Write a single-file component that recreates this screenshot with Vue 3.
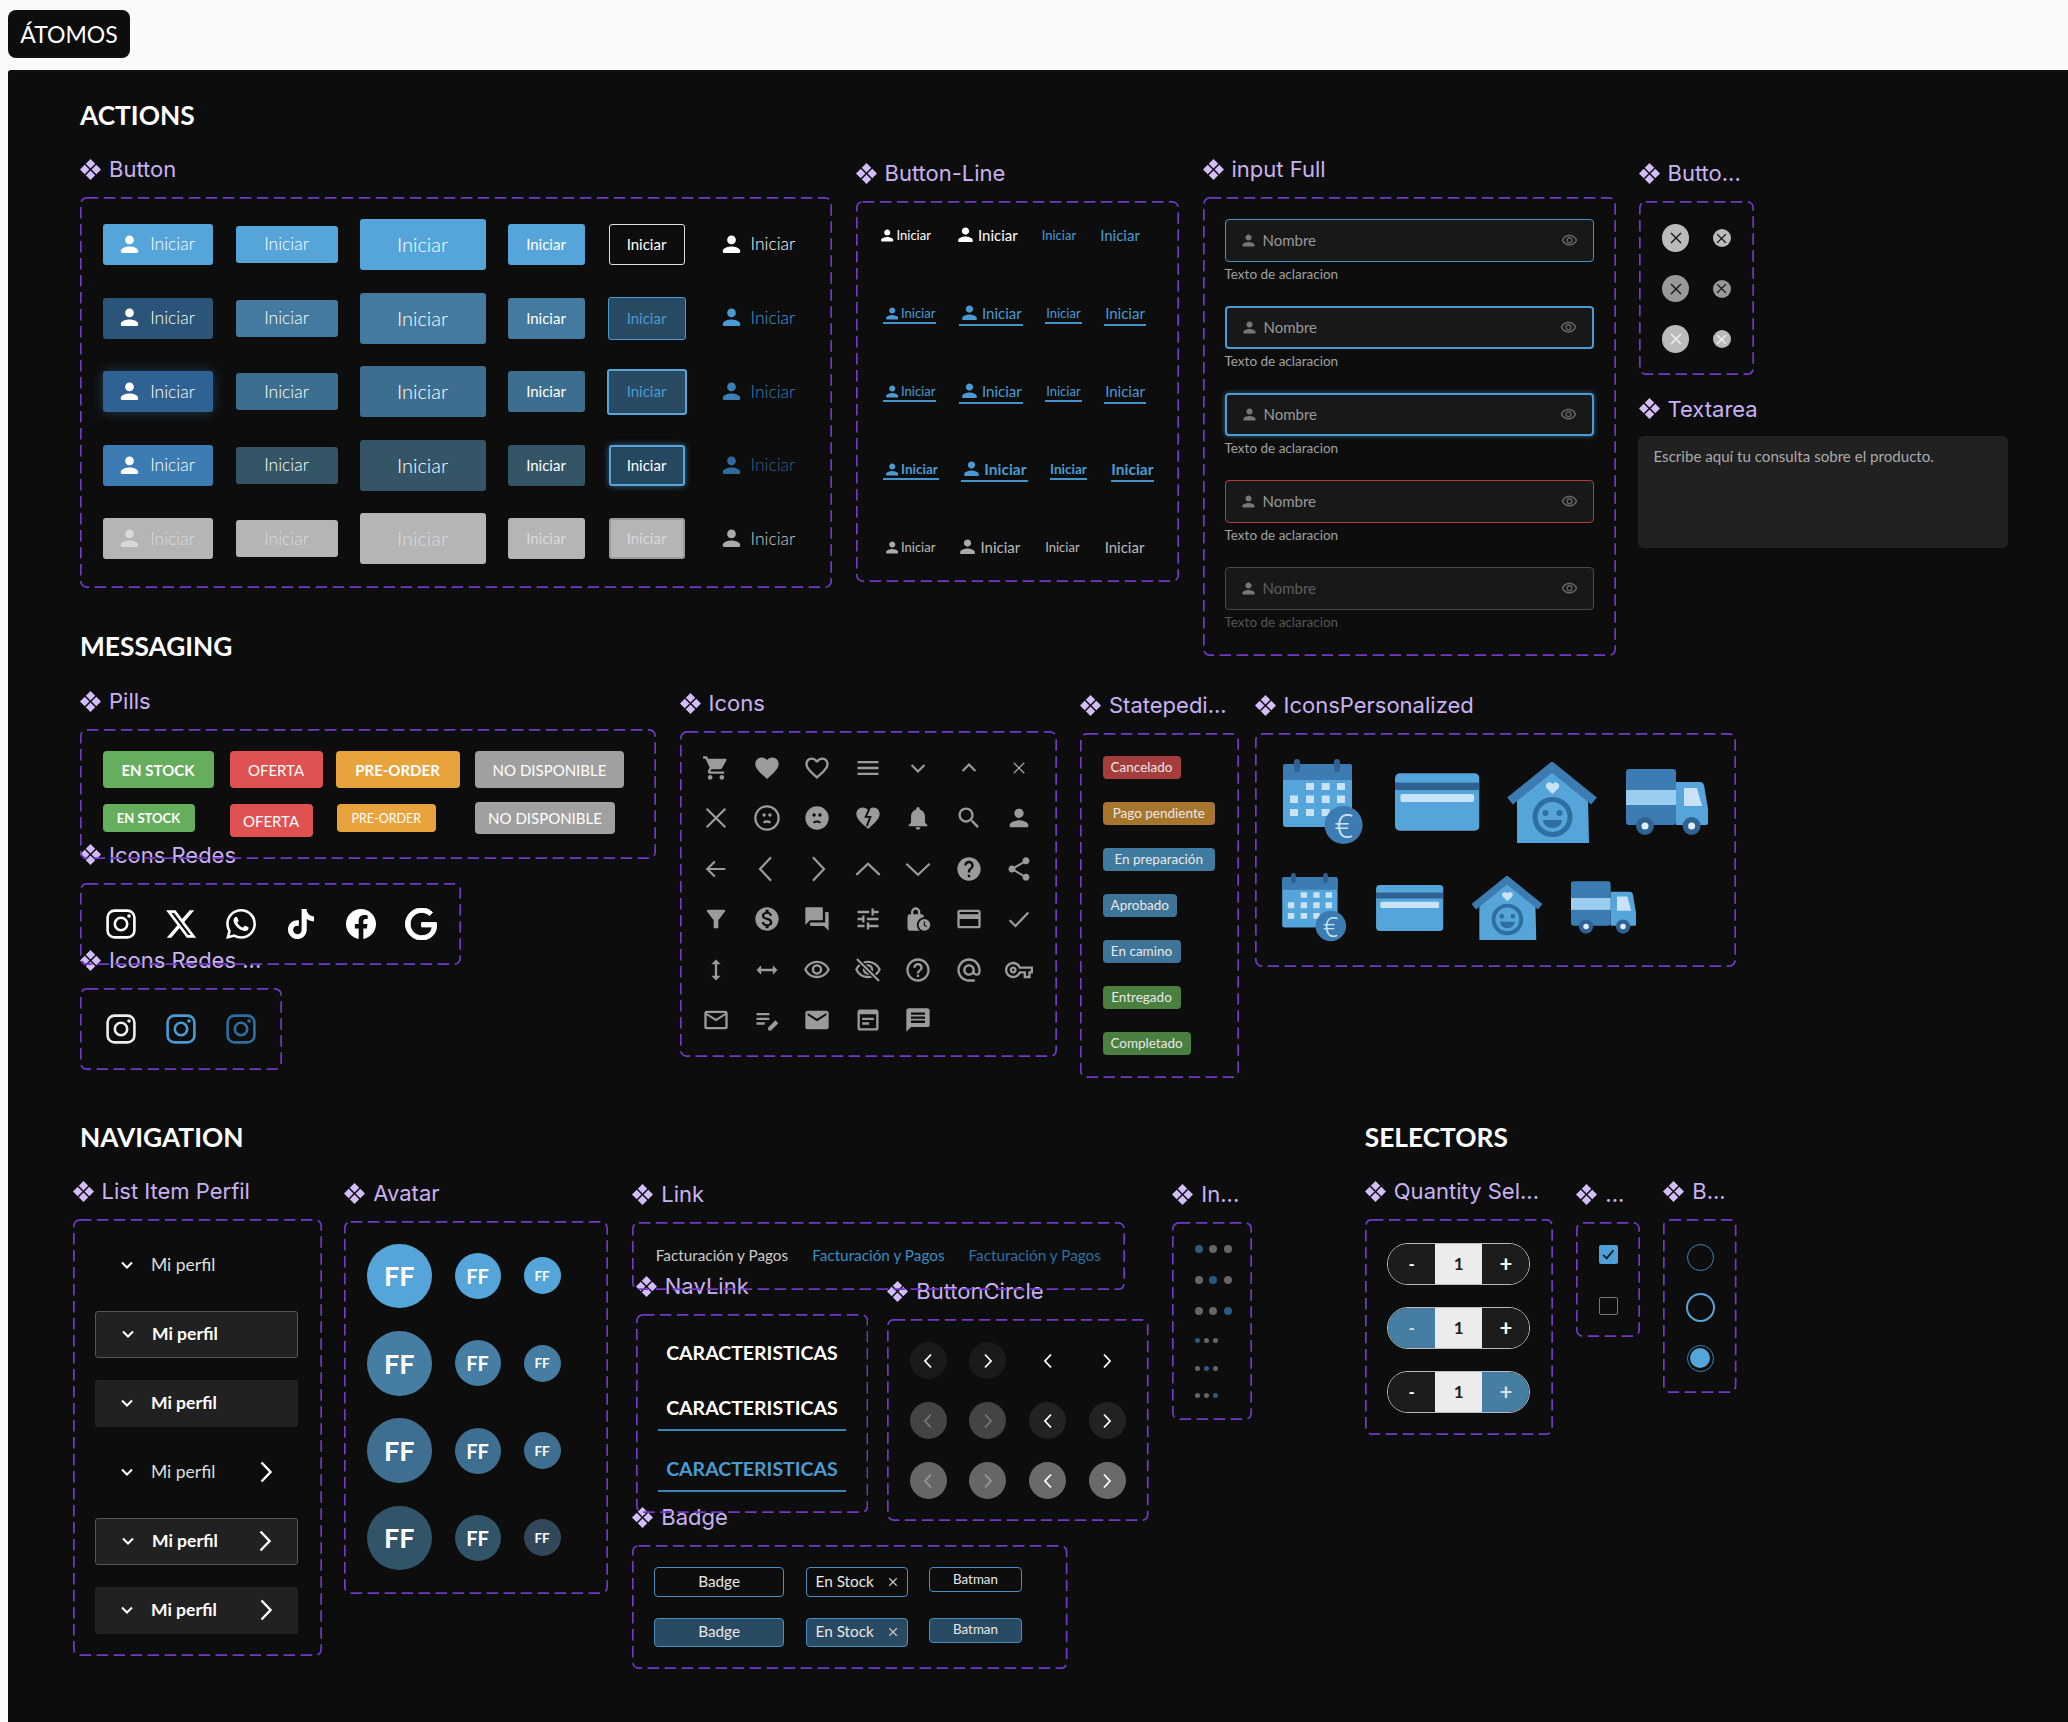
<script setup>
// paths for the 24px icon grid; "c" picks how a part is painted
const solid = (d) => ({ d, c: 'fill' })
const line = (d) => ({ d, c: 'line' })
const thin = (d) => ({ d, c: 'thin' })
const cut = (d) => ({ d, c: 'cut' })
const ring = 'M12 2a10 10 0 1 0 0 20a10 10 0 1 0 0-20z'
const heart = 'M12 21.35l-1.45-1.32C5.4 15.36 2 12.28 2 8.5 2 5.42 4.42 3 7.5 3c1.74 0 3.41.81 4.5 2.09C13.09 3.81 14.76 3 16.5 3 19.58 3 22 5.42 22 8.5c0 3.78-3.4 6.86-8.55 11.54L12 21.35z'
const eye = 'M12 6c3.79 0 7.17 2.13 8.82 5.5C19.17 14.87 15.79 17 12 17s-7.17-2.13-8.82-5.5C4.83 8.13 8.21 6 12 6m0-2C7 4 2.73 7.11 1 11.5 2.73 15.89 7 19 12 19s9.27-3.11 11-7.5C21.27 7.11 17 4 12 4zm0 5c1.38 0 2.5 1.12 2.5 2.5S13.38 14 12 14s-2.5-1.12-2.5-2.5S10.62 9 12 9m0-2c-2.48 0-4.5 2.02-4.5 4.5S9.52 16 12 16s4.5-2.02 4.5-4.5S14.48 7 12 7z'

const icons = [
  [solid('M7 18c-1.1 0-1.99.9-1.99 2S5.9 22 7 22s2-.9 2-2-.9-2-2-2zM1 2v2h2l3.6 7.59-1.35 2.45c-.16.28-.25.61-.25.96 0 1.1.9 2 2 2h12v-2H7.42c-.14 0-.25-.11-.25-.25l.03-.12.9-1.63h7.45c.75 0 1.41-.41 1.75-1.03l3.58-6.49c.08-.14.12-.31.12-.48 0-.55-.45-1-1-1H5.21l-.94-2H1zm16 16c-1.1 0-1.99.9-1.99 2s.89 2 1.99 2 2-.9 2-2-.9-2-2-2z')],
  [solid(heart)],
  [solid('M16.5 3c-1.74 0-3.41.81-4.5 2.09C10.91 3.81 9.24 3 7.5 3 4.42 3 2 5.42 2 8.5c0 3.78 3.4 6.86 8.55 11.54L12 21.35l1.45-1.32C18.6 15.36 22 12.28 22 8.5 22 5.42 19.58 3 16.5 3zm-4.4 15.55l-.1.1-.1-.1C7.14 14.24 4 11.39 4 8.5 4 6.5 5.5 5 7.5 5c1.54 0 3.04.99 3.57 2.36h1.87C13.46 5.99 14.96 5 16.5 5c2 0 3.5 1.5 3.5 3.5 0 2.89-3.14 5.74-7.9 10.05z')],
  [solid('M3 18h18v-2H3v2zm0-5h18v-2H3v2zm0-7v2h18V6H3z')],
  [line('M6.5 9.5l5.5 5.5 5.5-5.5')],
  [line('M6.5 14.5l5.5-5.5 5.5 5.5')],
  [thin('M7.5 7.5l9 9M16.5 7.5l-9 9')],

  [line('M4 4l16 16M20 4L4 20')],
  [line(ring), solid('M8 9.5a1.5 1.5 0 1 0 3 0a1.5 1.5 0 1 0-3 0zM13 9.5a1.5 1.5 0 1 0 3 0a1.5 1.5 0 1 0-3 0z'), line('M9 16c1.8-1.2 4.2-1.2 6 0')],
  [solid(ring), cut('M8 9.5a1.5 1.5 0 1 0 3 0a1.5 1.5 0 1 0-3 0zM13 9.5a1.5 1.5 0 1 0 3 0a1.5 1.5 0 1 0-3 0z'), { d: 'M9 16c1.8-1.2 4.2-1.2 6 0', c: 'cutline' }],
  [solid(heart), { d: 'M13.5 3.5L10 11h4l-3 8', c: 'cutline' }],
  [solid('M12 22c1.1 0 2-.9 2-2h-4c0 1.1.89 2 2 2zm6-6v-5c0-3.07-1.64-5.64-4.5-6.32V4c0-.83-.67-1.5-1.5-1.5s-1.5.67-1.5 1.5v.68C7.63 5.36 6 7.92 6 11v5l-2 2v1h16v-1l-2-2z')],
  [solid('M15.5 14h-.79l-.28-.27C15.41 12.59 16 11.11 16 9.5 16 5.91 13.09 3 9.5 3S3 5.91 3 9.5 5.91 16 9.5 16c1.61 0 3.09-.59 4.23-1.57l.27.28v.79l5 4.99L20.49 19l-4.99-5zm-6 0C7.01 14 5 11.99 5 9.5S7.01 5 9.5 5 14 7.01 14 9.5 11.99 14 9.5 14z')],
  [solid('M12 12c2.21 0 4-1.79 4-4s-1.79-4-4-4-4 1.79-4 4 1.79 4 4 4zm0 2c-2.67 0-8 1.34-8 4v1c0 .55.45 1 1 1h14c.55 0 1-.45 1-1v-1c0-2.66-5.33-4-8-4z')],

  [line('M20 12H4.5M11 5.5L4.5 12l6.5 6.5')],
  [line('M15.5 2L6 12l9.5 10')],
  [line('M8.5 2L18 12l-9.5 10')],
  [line('M2 17l10-9.5L22 17')],
  [line('M2 7.5l10 9.5 10-9.5')],
  [solid('M12 2C6.48 2 2 6.48 2 12s4.48 10 10 10 10-4.48 10-10S17.52 2 12 2zm1 17h-2v-2h2v2zm2.07-7.75l-.9.92C13.45 12.9 13 13.5 13 15h-2v-.5c0-1.1.45-2.1 1.17-2.83l1.24-1.26c.37-.36.59-.86.59-1.41 0-1.1-.9-2-2-2s-2 .9-2 2H8c0-2.21 1.79-4 4-4s4 1.79 4 4c0 .88-.36 1.68-.93 2.25z')],
  [solid('M18 16.08c-.76 0-1.44.3-1.96.77L8.91 12.7c.05-.23.09-.46.09-.7s-.04-.47-.09-.7l7.05-4.11c.54.5 1.25.81 2.04.81 1.66 0 3-1.34 3-3s-1.34-3-3-3-3 1.34-3 3c0 .24.04.47.09.7L8.04 9.81C7.5 9.31 6.79 9 6 9c-1.66 0-3 1.34-3 3s1.34 3 3 3c.79 0 1.5-.31 2.04-.81l7.12 4.16c-.05.21-.08.43-.08.65 0 1.61 1.31 2.92 2.92 2.92 1.61 0 2.92-1.31 2.92-2.92s-1.31-2.92-2.92-2.92z')],

  [solid('M4.25 5.61C6.27 8.2 10 13 10 13v6c0 .55.45 1 1 1h2c.55 0 1-.45 1-1v-6s3.72-4.8 5.74-7.39c.51-.66.04-1.61-.79-1.61H5.04c-.83 0-1.3.95-.79 1.61z')],
  [solid('M12 2C6.48 2 2 6.48 2 12s4.48 10 10 10 10-4.48 10-10S17.52 2 12 2zm1.41 16.09V20h-2.67v-1.93c-1.71-.36-3.16-1.46-3.27-3.4h1.96c.1 1.05.82 1.87 2.65 1.87 1.96 0 2.4-.98 2.4-1.59 0-.83-.44-1.61-2.67-2.14-2.48-.6-4.18-1.62-4.18-3.67 0-1.72 1.39-2.84 3.11-3.21V4h2.67v1.95c1.86.45 2.79 1.86 2.85 3.39H14.3c-.05-1.11-.64-1.87-2.22-1.87-1.5 0-2.4.68-2.4 1.64 0 .84.65 1.39 2.67 1.91s4.18 1.39 4.18 3.91c-.01 1.83-1.38 2.83-3.12 3.16z')],
  [solid('M21 6h-2v9H6v2c0 .55.45 1 1 1h11l4 4V7c0-.55-.45-1-1-1zm-4 6V3c0-.55-.45-1-1-1H3c-.55 0-1 .45-1 1v14l4-4h10c.55 0 1-.45 1-1z')],
  [solid('M3 17v2h6v-2H3zM3 5v2h10V5H3zm10 16v-2h8v-2h-8v-2h-2v6h2zM7 9v2H3v2h4v2h2V9H7zm14 4v-2H11v2h10zm-6-4h2V7h4V5h-4V3h-2v6z')],
  [solid('M15 8h-1V6a4 4 0 0 0-8 0v2H5a2 2 0 0 0-2 2v10a2 2 0 0 0 2 2h10a2 2 0 0 0 2-2V10a2 2 0 0 0-2-2zM8 6a2 2 0 0 1 4 0v2H8z'), cut('M17.5 10.5a6.5 6.5 0 1 0 0 13a6.5 6.5 0 1 0 0-13z'), solid('M17.5 12a5 5 0 1 0 0 10a5 5 0 1 0 0-10z'), { d: 'M17.5 14.2V17.3l2 1.3', c: 'cutthin' }],
  [solid('M20 4H4c-1.11 0-1.99.89-1.99 2L2 18c0 1.11.89 2 2 2h16c1.11 0 2-.89 2-2V6c0-1.11-.89-2-2-2zm0 14H4v-6h16v6zm0-10H4V6h16v2z')],
  [line('M4 13l5 5L20 6.5')],

  [solid('M13 6.99h3L12 3 8 6.99h3v10.02H8L12 21l4-3.99h-3z')],
  [solid('M21 12l-4-4v3H7V8l-4 4 4 4v-3h10v3z')],
  [solid(eye)],
  [solid(eye), { d: 'M2.5 2.5l19 19', c: 'cutwide' }, line('M2.5 2.5l19 19')],
  [solid('M11 18h2v-2h-2v2zm1-16C6.48 2 2 6.48 2 12s4.48 10 10 10 10-4.48 10-10S17.52 2 12 2zm0 18c-4.41 0-8-3.59-8-8s3.59-8 8-8 8 3.59 8 8-3.59 8-8 8zm0-14c-2.21 0-4 1.79-4 4h2c0-1.1.9-2 2-2s2 .9 2 2c0 2-3 1.75-3 5h2c0-2.25 3-2.5 3-5 0-2.21-1.79-4-4-4z')],
  [solid('M12 2C6.48 2 2 6.48 2 12s4.48 10 10 10h5v-2h-5c-4.34 0-8-3.66-8-8s3.66-8 8-8 8 3.66 8 8v1.43c0 .79-.71 1.57-1.5 1.57s-1.5-.78-1.5-1.57V12c0-2.76-2.24-5-5-5s-5 2.24-5 5 2.24 5 5 5c1.38 0 2.64-.56 3.54-1.47.65.89 1.77 1.47 2.96 1.47 1.97 0 3.5-1.6 3.5-3.57V12c0-5.52-4.48-10-10-10zm0 13c-1.66 0-3-1.34-3-3s1.34-3 3-3 3 1.34 3 3-1.34 3-3 3z')],
  [solid('M22 19h-6v-4h-2.68c-1.14 2.42-3.6 4-6.32 4-3.86 0-7-3.14-7-7s3.14-7 7-7c2.72 0 5.17 1.58 6.32 4H24v6h-2v4zm-4-2h2v-4h2v-2H11.94l-.23-.67C11.01 8.34 9.11 7 7 7c-2.76 0-5 2.24-5 5s2.24 5 5 5c2.11 0 4.01-1.34 4.71-3.33l.23-.67H18v4zM7 15c-1.65 0-3-1.35-3-3s1.35-3 3-3 3 1.35 3 3-1.35 3-3 3zm0-4c-.55 0-1 .45-1 1s.45 1 1 1 1-.45 1-1-.45-1-1-1z')],

  [solid('M20 4H4c-1.1 0-1.99.9-1.99 2L2 18c0 1.1.9 2 2 2h16c1.1 0 2-.9 2-2V6c0-1.1-.9-2-2-2zm0 14H4V8l8 5 8-5v10zm-8-7L4 6h16l-8 5z')],
  [solid('M3 10h11v2H3zM3 6h11v2H3zM3 14h7v2H3zM13 21v-2.5l6.2-6.2 2.5 2.5-6.2 6.2z')],
  [solid('M20 4H4c-1.1 0-1.99.9-1.99 2L2 18c0 1.1.9 2 2 2h16c1.1 0 2-.9 2-2V6c0-1.1-.9-2-2-2zm0 4l-8 5-8-5V6l8 5 8-5v2z')],
  [solid('M19 3H5c-1.1 0-2 .9-2 2v14c0 1.1.9 2 2 2h14c1.1 0 2-.9 2-2V5c0-1.1-.9-2-2-2zm0 16H5V7h14v12zM7 10h10v2H7zM7 14h6v2H7z')],
  [solid('M20 2H4c-1.1 0-1.99.9-1.99 2L2 22l4-4h14c1.1 0 2-.9 2-2V4c0-1.1-.9-2-2-2zM6 5.5h12v2H6zM6 9h12v2H6zM6 12.5h12v2H6z')]
]

const social = [
  { box: '1.2 2 21.6 20', cls: 's-x', d: 'M18.244 2.25h3.308l-7.227 8.26 8.502 11.24H16.17l-5.214-6.817L4.99 21.75H1.68l7.73-8.835L1.254 2.25H8.08l4.713 6.231zm-1.161 17.52h1.833L7.084 4.126H5.117z' },
  { box: '0 0 24 24', cls: '', d: 'M17.472 14.382c-.297-.149-1.758-.867-2.03-.967-.273-.099-.471-.148-.67.15-.197.297-.767.966-.94 1.164-.173.199-.347.223-.644.075-.297-.15-1.255-.463-2.39-1.475-.883-.788-1.48-1.761-1.653-2.059-.173-.297-.018-.458.13-.606.134-.133.298-.347.446-.52.149-.174.198-.298.298-.497.099-.198.05-.371-.025-.52-.075-.149-.669-1.612-.916-2.207-.242-.579-.487-.5-.669-.51-.173-.008-.371-.01-.57-.01-.198 0-.52.074-.792.372-.272.297-1.04 1.016-1.04 2.479 0 1.462 1.065 2.875 1.213 3.074.149.198 2.096 3.2 5.077 4.487.709.306 1.262.489 1.694.625.712.227 1.36.195 1.871.118.571-.085 1.758-.719 2.006-1.413.248-.694.248-1.289.173-1.413-.074-.124-.272-.198-.57-.347m-5.421 7.403h-.004a9.87 9.87 0 01-5.031-1.378l-.361-.214-3.741.982.998-3.648-.235-.374a9.86 9.86 0 01-1.51-5.26c.001-5.45 4.436-9.884 9.888-9.884 2.64 0 5.122 1.03 6.988 2.898a9.825 9.825 0 012.893 6.994c-.003 5.45-4.437 9.884-9.885 9.884m8.413-18.297A11.815 11.815 0 0012.05 0C5.495 0 .16 5.335.157 11.892c0 2.096.547 4.142 1.588 5.945L.057 24l6.305-1.654a11.882 11.882 0 005.683 1.448h.005c6.554 0 11.89-5.335 11.893-11.893a11.821 11.821 0 00-3.48-8.413z' },
  { box: '0 0 24 24', cls: '', d: 'M12.525.02c1.31-.02 2.61-.01 3.91-.02.08 1.53.63 3.09 1.75 4.17 1.12 1.11 2.7 1.62 4.24 1.79v4.03c-1.44-.05-2.89-.35-4.2-.97-.57-.26-1.1-.59-1.62-.93-.01 2.92.01 5.84-.02 8.75-.08 1.4-.54 2.79-1.35 3.94-1.31 1.92-3.58 3.17-5.91 3.21-1.43.08-2.86-.31-4.08-1.03-2.02-1.19-3.44-3.37-3.65-5.71-.02-.5-.03-1-.01-1.49.18-1.9 1.12-3.72 2.58-4.96 1.66-1.44 3.98-2.13 6.15-1.72.02 1.48-.04 2.96-.04 4.44-.99-.32-2.15-.23-3.02.37-.63.41-1.11 1.04-1.36 1.75-.21.51-.15 1.07-.14 1.61.24 1.64 1.82 3.02 3.5 2.87 1.12-.01 2.19-.66 2.77-1.61.19-.33.4-.67.41-1.06.1-1.79.06-3.57.07-5.36.01-4.03-.01-8.05.02-12.07z' },
  { box: '0 0 24 24', cls: '', d: 'M24 12.073c0-6.627-5.373-12-12-12s-12 5.373-12 12c0 5.99 4.388 10.954 10.125 11.854v-8.385H7.078v-3.47h3.047V9.43c0-3.007 1.792-4.669 4.533-4.669 1.312 0 2.686.235 2.686.235v2.953H15.83c-1.491 0-1.956.925-1.956 1.874v2.25h3.328l-.532 3.47h-2.796v8.385C19.612 23.027 24 18.062 24 12.073z' },
  { box: '0 0 24 24', cls: 's-g', d: 'M12.48 10.92v3.28h7.84c-.24 1.84-.853 3.187-1.787 4.133-1.147 1.147-2.933 2.4-6.053 2.4-4.827 0-8.6-3.893-8.6-8.72s3.773-8.72 8.6-8.72c2.6 0 4.507 1.027 5.907 2.347l2.307-2.307C18.747 1.44 16.133 0 12.48 0 5.867 0 .307 5.387.307 12s5.56 12 12.173 12c3.573 0 6.267-1.173 8.373-3.36 2.16-2.16 2.84-5.213 2.84-7.667 0-.76-.053-1.467-.173-2.053H12.48z' }
]

const inputs = ['in1', 'in2', 'in3', 'in4', 'in5']
const lineRows = ['r1', 'r2', 'r3', 'r4', 'r5']
const lineCells = ['si', 'bi', 's', 'b']

const states = [
  { t: 'Cancelado', w: 78, c: '#a53d3d' },
  { t: 'Pago pendiente', w: 112.5, c: '#a8752c' },
  { t: 'En preparación', w: 112.5, c: '#3f7a9f' },
  { t: 'Aprobado', w: 74.5, c: '#3f7499' },
  { t: 'En camino', w: 78, c: '#3f7499' },
  { t: 'Entregado', w: 78, c: '#4a7f40' },
  { t: 'Completado', w: 88, c: '#4a7f40' }
]

const custom = [
  [
    { id: '#cal', w: 80, h: 86, ml: 28.7, euro: 33 },
    { id: '#card', w: 84.5, h: 58, ml: 32 },
    { id: '#house', w: 90, h: 81, ml: 27.5 },
    { id: '#truck', w: 82, h: 66, ml: 29 }
  ],
  [
    { id: '#cal', w: 64.6, h: 69, ml: 27, euro: 27 },
    { id: '#card', w: 67.5, h: 46, ml: 30 },
    { id: '#house', w: 72, h: 64, ml: 27 },
    { id: '#truck', w: 65, h: 53, ml: 28 }
  ]
]

const avatars = ['a1', 'a2', 'a3', 'a4']
const listItems = [
  { cls: 'plain', arrow: false },
  { cls: 'boxed', arrow: false },
  { cls: 'filled', arrow: false },
  { cls: 'plain', arrow: true },
  { cls: 'boxed', arrow: true },
  { cls: 'filled', arrow: true }
]
const circles = [
  ['c1', 'c1', 'c0', 'c0'],
  ['c2', 'c2', 'c3', 'c3'],
  ['c4', 'c4', 'c5', 'c5']
]
const qty = [['', ''], ['on', ''], ['', 'on']]
</script>

<template>
  <div class="page">
    <svg class="defs" width="0" height="0" aria-hidden="true">
      <symbol id="dm" viewBox="0 0 24 24">
        <path d="M12 0l5.4 5.4L12 10.8 6.6 5.4zM5.4 6.6L10.8 12l-5.4 5.4L0 12zM18.6 6.6L24 12l-5.4 5.4L13.2 12zM12 13.2l5.4 5.4L12 24l-5.4-5.4z" fill="currentColor" />
      </symbol>
      <symbol id="person" viewBox="4 3.5 16 17">
        <path d="M12 12c2.21 0 4-1.79 4-4s-1.79-4-4-4-4 1.79-4 4 1.79 4 4 4zm0 2c-2.67 0-8 1.34-8 4v1c0 .55.45 1 1 1h14c.55 0 1-.45 1-1v-1c0-2.66-5.33-4-8-4z" fill="currentColor" />
      </symbol>
      <symbol id="eye" viewBox="0 0 24 24">
        <path d="M12 6c3.79 0 7.17 2.13 8.82 5.5C19.17 14.87 15.79 17 12 17s-7.17-2.13-8.82-5.5C4.83 8.13 8.21 6 12 6m0-2C7 4 2.73 7.11 1 11.5 2.73 15.89 7 19 12 19s9.27-3.11 11-7.5C21.27 7.11 17 4 12 4zm0 5c1.38 0 2.5 1.12 2.5 2.5S13.38 14 12 14s-2.5-1.12-2.5-2.5S10.62 9 12 9m0-2c-2.48 0-4.5 2.02-4.5 4.5S9.52 16 12 16s4.5-2.02 4.5-4.5S14.48 7 12 7z" fill="currentColor" />
      </symbol>
      <symbol id="ig" viewBox="0 0 30 30">
        <rect x="1.6" y="1.6" width="26.8" height="26.8" rx="7" fill="none" stroke="currentColor" stroke-width="2.6" />
        <circle cx="15" cy="15" r="6.2" fill="none" stroke="currentColor" stroke-width="2.6" />
        <circle cx="23" cy="7" r="1.8" fill="currentColor" />
      </symbol>
      <symbol id="cal" viewBox="0 0 80 86">
        <rect x="0" y="5" width="69" height="63" rx="3" fill="#55a5da" />
        <path d="M0 21V8a3 3 0 0 1 3-3h63a3 3 0 0 1 3 3v13z" fill="#3d7cb2" />
        <rect x="11" y="0" width="6" height="13" rx="3" fill="#2f6292" />
        <rect x="51" y="0" width="6" height="13" rx="3" fill="#2f6292" />
        <path d="M23 24h8v7h-8zM38.7 24h8v7h-8zM54 24h8v7h-8zM7 36.5h8v7.5H7zM23 36.5h8v7.5h-8zM38.7 36.5h8v7.5h-8zM54 36.5h8v7.5h-8zM7 50h8v7H7zM23 50h8v7h-8zM38.7 50h8v7h-8z" fill="#c8e3f7" />
        <circle cx="60.6" cy="66" r="19" fill="#3d7cb2" />
      </symbol>
      <symbol id="card" viewBox="0 0 85 58">
        <rect width="85" height="58" rx="5" fill="#55a5da" />
        <rect y="9.5" width="85" height="7.5" fill="#2f6292" />
        <rect x="5.5" y="21" width="74" height="8" rx="2" fill="#c8e3f7" />
      </symbol>
      <symbol id="house" viewBox="0 0 90 81">
        <path d="M10 36L45 8l36 28 1 45H10z" fill="#55a5da" />
        <path d="M3 39L45 5l42 34" fill="none" stroke="#3d7cb2" stroke-width="9" />
        <path d="M45.5 32l-6-6a3.6 3.6 0 0 1 6-4a3.6 3.6 0 0 1 6 4z" fill="#c8e3f7" />
        <circle cx="45.5" cy="55" r="17.5" fill="#55a5da" stroke="#2f6ea0" stroke-width="5" />
        <circle cx="38.5" cy="51" r="3" fill="#2f6ea0" />
        <circle cx="52.5" cy="51" r="3" fill="#2f6ea0" />
        <path d="M36 58h19a9.5 8 0 0 1-19 0z" fill="#2f6ea0" />
      </symbol>
      <symbol id="truck" viewBox="0 0 82 66">
        <path d="M50 13h24q3 0 4 3l4 24v14q0 2-2 2H50z" fill="#55a5da" />
        <path d="M58 19h13l5 18H58z" fill="#c8e3f7" />
        <rect width="50" height="56" rx="3" fill="#3d7cb2" />
        <rect y="21" width="50" height="15" fill="#9bcdf0" />
        <circle cx="19" cy="57" r="9" fill="#2f6292" />
        <circle cx="19" cy="57" r="3.5" fill="#dff0fb" />
        <circle cx="65.6" cy="57" r="9" fill="#2f6292" />
        <circle cx="65.6" cy="57" r="3.5" fill="#dff0fb" />
      </symbol>
    </svg>

    <div class="tab">ÁTOMOS</div>

    <div class="canvas">
      <!-- ACTIONS -->
      <h2 class="title">ACTIONS</h2>
      <div class="row row-actions">
        <div class="group">
          <div class="label"><svg class="dm"><use href="#dm" /></svg><span>Button</span></div>
          <div class="frame f-button">
            <svg class="dash"><rect /></svg>
            <div class="btn-grid">
              <template v-for="s in 5" :key="s">
                <div class="btn w-a" :class="`fa${s}`"><svg class="pi"><use href="#person" /></svg>Iniciar</div>
                <div class="btn w-b" :class="`fb${s}`">Iniciar</div>
                <div class="btn w-c" :class="`fb${s}`">Iniciar</div>
                <div class="btn w-d" :class="`fb${s}`">Iniciar</div>
                <div class="btn w-e" :class="`fe${s}`">Iniciar</div>
                <div class="btn w-f" :class="`ff${s}`"><svg class="pi"><use href="#person" /></svg>Iniciar</div>
              </template>
            </div>
          </div>
        </div>

        <div class="group g-line">
          <div class="label"><svg class="dm"><use href="#dm" /></svg><span>Button-Line</span></div>
          <div class="frame f-line">
            <svg class="dash"><rect /></svg>
            <div v-for="r in lineRows" :key="r" class="ln-row" :class="r">
              <div v-for="c in lineCells" :key="c" class="ln" :class="c">
                <svg v-if="c === 'si' || c === 'bi'" class="pi"><use href="#person" /></svg>
                <span>Iniciar</span>
              </div>
            </div>
          </div>
        </div>

        <div class="group g-input">
          <div class="label"><svg class="dm"><use href="#dm" /></svg><span>input Full</span></div>
          <div class="frame f-input">
            <svg class="dash"><rect /></svg>
            <div v-for="v in inputs" :key="v" class="field" :class="v">
              <div class="box">
                <svg class="pi"><use href="#person" /></svg>
                <span class="ph">Nombre</span>
                <svg class="eye"><use href="#eye" /></svg>
              </div>
              <div class="help">Texto de aclaracion</div>
            </div>
          </div>
        </div>

        <div class="col-right">
          <div class="group">
            <div class="label"><svg class="dm"><use href="#dm" /></svg><span>Butto...</span></div>
            <div class="frame f-close">
              <svg class="dash"><rect /></svg>
              <template v-for="n in 3" :key="n">
                <div class="x-big" :class="`x${n}`">
                  <svg viewBox="0 0 24 24"><path d="M6 6l12 12M18 6L6 18" /></svg>
                </div>
                <div class="x-small" :class="`x${n}`">
                  <svg viewBox="0 0 24 24"><path d="M5 5l14 14M19 5L5 19" /></svg>
                </div>
              </template>
            </div>
          </div>
          <div class="group g-textarea">
            <div class="label l-ta"><svg class="dm"><use href="#dm" /></svg><span>Textarea</span></div>
            <div class="textarea">Escribe aquí tu consulta sobre el producto.</div>
          </div>
        </div>
      </div>

      <!-- MESSAGING -->
      <h2 class="title">MESSAGING</h2>
      <div class="row row-msg">
        <div class="col-pills">
          <div class="group">
            <div class="label"><svg class="dm"><use href="#dm" /></svg><span>Pills</span></div>
            <div class="frame f-pills">
              <svg class="dash"><rect /></svg>
              <div class="pill green bold p-lg w111">EN STOCK</div>
              <div class="pill red p-lg w93">OFERTA</div>
              <div class="pill orange bold p-lg w124">PRE-ORDER</div>
              <div class="pill gray p-lg w149">NO DISPONIBLE</div>
              <div class="pill green bold p-sm w92">EN STOCK</div>
              <div class="pill red p-md w83">OFERTA</div>
              <div class="pill orange p-sm w98">PRE-ORDER</div>
              <div class="pill gray p-md w140">NO DISPONIBLE</div>
            </div>
          </div>
          <div class="group g-redes">
            <div class="label"><svg class="dm"><use href="#dm" /></svg><span>Icons Redes</span></div>
            <div class="frame f-redes">
              <svg class="dash"><rect /></svg>
              <svg class="soc ig1"><use href="#ig" /></svg>
              <svg v-for="s in social" :key="s.d" class="soc" :class="s.cls" :viewBox="s.box" preserveAspectRatio="none"><path :d="s.d" fill="#fff" /></svg>
            </div>
          </div>
          <div class="group g-redes">
            <div class="label"><svg class="dm"><use href="#dm" /></svg><span>Icons Redes ...</span></div>
            <div class="frame f-redes2">
              <svg class="dash"><rect /></svg>
              <svg class="soc ig1"><use href="#ig" /></svg>
              <svg class="soc ig2"><use href="#ig" /></svg>
              <svg class="soc ig3"><use href="#ig" /></svg>
            </div>
          </div>
        </div>

        <div class="group g-icons">
          <div class="label"><svg class="dm"><use href="#dm" /></svg><span>Icons</span></div>
          <div class="frame f-icons">
            <svg class="dash"><rect /></svg>
            <svg v-for="(ic, i) in icons" :key="i" class="ic" viewBox="0 0 24 24">
              <path v-for="(p, j) in ic" :key="j" :d="p.d" :class="p.c" />
            </svg>
          </div>
        </div>

        <div class="group g-state">
          <div class="label"><svg class="dm"><use href="#dm" /></svg><span>Statepedi...</span></div>
          <div class="frame f-state">
            <svg class="dash"><rect /></svg>
            <div v-for="s in states" :key="s.t" class="state" :style="{ width: s.w + 'px', background: s.c }">{{ s.t }}</div>
          </div>
        </div>

        <div class="group g-pers">
          <div class="label"><svg class="dm"><use href="#dm" /></svg><span>IconsPersonalized</span></div>
          <div class="frame f-pers">
            <svg class="dash"><rect /></svg>
            <div v-for="(r, i) in custom" :key="i" class="pers-row" :class="`pr${i}`">
              <div
                v-for="ic in r"
                :key="ic.id"
                class="pers"
                :style="{ width: ic.w + 'px', height: ic.h + 'px', marginLeft: ic.ml + 'px' }"
              >
                <svg><use :href="ic.id" /></svg>
                <span v-if="ic.euro" class="euro" :style="{ fontSize: ic.euro + 'px' }">€</span>
              </div>
            </div>
          </div>
        </div>
      </div>

      <!-- NAVIGATION + SELECTORS -->
      <div class="row row-nav">
        <div class="sec-nav">
          <h2 class="title">NAVIGATION</h2>
          <div class="row">
            <div class="group g-list">
              <div class="label"><svg class="dm"><use href="#dm" /></svg><span>List Item Perfil</span></div>
              <div class="frame f-list">
                <svg class="dash"><rect /></svg>
                <div v-for="(it, i) in listItems" :key="i" class="li" :class="it.cls">
                  <svg class="li-chev" viewBox="0 0 12 8"><path d="M1 1.5l5 5 5-5" /></svg>
                  <span>Mi perfil</span>
                  <svg v-if="it.arrow" class="li-arrow" viewBox="0 0 12 22"><path d="M1.5 1.5L10.5 11l-9 9.5" /></svg>
                </div>
              </div>
            </div>

            <div class="group g-avatar">
              <div class="label"><svg class="dm"><use href="#dm" /></svg><span>Avatar</span></div>
              <div class="frame f-avatar">
                <svg class="dash"><rect /></svg>
                <template v-for="a in avatars" :key="a">
                  <div class="av lg" :class="a">FF</div>
                  <div class="av md" :class="a">FF</div>
                  <div class="av sm" :class="a">FF</div>
                </template>
              </div>
            </div>

            <div class="col-mid">
              <div class="group">
                <div class="label"><svg class="dm"><use href="#dm" /></svg><span>Link</span></div>
                <div class="frame f-link">
                  <svg class="dash"><rect /></svg>
                  <span class="lk l1">Facturación y Pagos</span>
                  <span class="lk l2">Facturación y Pagos</span>
                  <span class="lk l3">Facturación y Pagos</span>
                </div>
              </div>
              <div class="mid-row">
                <div class="group g-navlink">
                  <div class="label"><svg class="dm"><use href="#dm" /></svg><span>NavLink</span></div>
                  <div class="frame f-navlink">
                    <svg class="dash"><rect /></svg>
                    <div class="nl n1">CARACTERISTICAS</div>
                    <div class="nl n2">CARACTERISTICAS</div>
                    <div class="nl n3">CARACTERISTICAS</div>
                  </div>
                </div>
                <div class="group g-circle">
                  <div class="label"><svg class="dm"><use href="#dm" /></svg><span>ButtonCircle</span></div>
                  <div class="frame f-circle">
                    <svg class="dash"><rect /></svg>
                    <template v-for="(r, i) in circles" :key="i">
                      <div v-for="(c, j) in r" :key="j" class="circ" :class="c">
                        <svg viewBox="0 0 10 16"><path :d="j % 2 ? 'M2 1.5L8 8l-6 6.5' : 'M8 1.5L2 8l6 6.5'" /></svg>
                      </div>
                    </template>
                  </div>
                </div>
              </div>
              <div class="group g-badge">
                <div class="label"><svg class="dm"><use href="#dm" /></svg><span>Badge</span></div>
                <div class="frame f-badge">
                  <svg class="dash"><rect /></svg>
                  <div v-for="n in 2" :key="n" class="bd-row" :class="{ on: n === 2 }">
                    <div class="bd bd1">Badge</div>
                    <div class="bd bd2">En Stock
                      <svg viewBox="0 0 12 12"><path d="M1.5 1.5l9 9M10.5 1.5l-9 9" /></svg>
                    </div>
                    <div class="bd bd3">Batman</div>
                  </div>
                </div>
              </div>
            </div>

            <div class="group g-ind">
              <div class="label"><svg class="dm"><use href="#dm" /></svg><span>In...</span></div>
              <div class="frame f-ind">
                <svg class="dash"><rect /></svg>
                <div v-for="n in 3" :key="n" class="dots big">
                  <i v-for="k in 3" :key="k" :class="{ on: k === n }"></i>
                </div>
                <div v-for="n in 3" :key="'s' + n" class="dots small">
                  <i v-for="k in 3" :key="k" :class="{ on: k === n }"></i>
                </div>
              </div>
            </div>
          </div>
        </div>

        <div class="sec-sel">
          <h2 class="title">SELECTORS</h2>
          <div class="row">
            <div class="group">
              <div class="label"><svg class="dm"><use href="#dm" /></svg><span>Quantity Sel...</span></div>
              <div class="frame f-qty">
                <svg class="dash"><rect /></svg>
                <div v-for="(q, i) in qty" :key="i" class="qty">
                  <span class="q-btn" :class="q[0]">-</span>
                  <span class="q-val">1</span>
                  <span class="q-btn plus" :class="q[1]">+</span>
                </div>
              </div>
            </div>
            <div class="group g-check">
              <div class="label"><svg class="dm"><use href="#dm" /></svg><span>...</span></div>
              <div class="frame f-check">
                <svg class="dash"><rect /></svg>
                <div class="cb on"><svg viewBox="0 0 18 18"><path d="M4 9.5l3.5 3.5L14 5" /></svg></div>
                <div class="cb"></div>
              </div>
            </div>
            <div class="group g-radio">
              <div class="label"><svg class="dm"><use href="#dm" /></svg><span>B...</span></div>
              <div class="frame f-radio">
                <svg class="dash"><rect /></svg>
                <div class="rd"></div>
                <div class="rd hov"></div>
                <div class="rd sel"><i></i></div>
              </div>
            </div>
          </div>
        </div>
      </div>
    </div>
  </div>
</template>

<style>
html, body { margin: 0; background: #f9fafc; }
</style>

<style scoped>
.page {
  position: relative;
  width: 2068px;
  height: 1722px;
  overflow: hidden;
  background: #f9fafc;
  font-family: Lato, "Noto Sans", sans-serif;
  font-weight: 300;
  color: #fff;
}
.defs { position: absolute; }

.tab {
  margin: 10px 0 0 8px;
  width: 122px;
  height: 48px;
  border-radius: 8px;
  background: #0d0d0d;
  font-size: 23px;
  font-weight: 400;
  line-height: 48px;
  text-align: center;
}
.canvas {
  margin: 12px 0 0 8px;
  height: 1652px;
  padding: 25px 0 0 72px;
  box-sizing: border-box;
  background: #0d0d0d;
  border-top-left-radius: 3px;
}
.title {
  margin: 0 0 20px;
  height: 40px;
  font-size: 26.3px;
  font-weight: 700;
  line-height: 40px;
}
.row { display: flex; align-items: flex-start; }
.row-actions { height: 471px; }
.row-msg { height: 430px; margin-top: 21px; }

.label {
  display: flex;
  align-items: center;
  gap: 8px;
  height: 28px;
  margin-bottom: 14px;
  color: #c9b2f2;
  font-family: Inter, sans-serif;
  font-size: 22px;
  font-weight: 400;
  white-space: nowrap;
}
.dm { width: 21px; height: 21px; color: #d3bcf8; flex: none; }

.frame { position: relative; box-sizing: border-box; }
.dash {
  position: absolute;
  left: 0;
  top: 0;
  width: 100%;
  height: 100%;
  pointer-events: none;
}
.dash rect {
  x: 0.85px;
  y: 0.85px;
  width: calc(100% - 1.7px);
  height: calc(100% - 1.7px);
  rx: 6px;
  fill: none;
  stroke: #7239c7;
  stroke-width: 1.7px;
  stroke-dasharray: 11.5 5.5;
}

/* Button */
.f-button { width: 752px; height: 391px; padding: 10.7px 0 0 22.5px; }
.btn-grid {
  display: grid;
  grid-template-columns: 133px 124px 148px 101px 113px auto;
  grid-auto-rows: 73.6px;
  align-items: center;
  justify-items: start;
}
.btn {
  display: flex;
  align-items: center;
  justify-content: center;
  box-sizing: border-box;
  padding-bottom: 1px;
  border-radius: 3px;
  font-size: 17.5px;
}
.pi { width: 19px; height: 18.5px; flex: none; }
.w-a { width: 110px; height: 41px; gap: 11px; }
.w-b { width: 102px; height: 37px; }
.w-c { width: 126px; height: 51px; font-size: 20px; }
.w-d { width: 77px; height: 41px; font-size: 15px; font-weight: 400; }
.w-e { width: 76px; height: 41px; font-size: 15px; font-weight: 400; }
.w-f { gap: 10px; }

.fa1, .fb1 { background: #55a5da; }
.fa2 { background: #2a5478; }
.fb2 { background: #447aa0; }
.fa3 { background: #2f6292; box-shadow: 0 0 12px rgba(74, 155, 211, .35); }
.fb3 { background: #3e6e8f; }
.fa4 { background: #3d7cb2; }
.fb4 { background: #335566; }
.fa5, .fb5 { background: #b5b5b5; color: #d9d9d9; }
.fe1 { border: 1px solid #ddd; background: #0d0d0d; }
.fe2 { border: 1.5px solid #4b9ad4; background: #284a62; color: #4a9bd3; height: 43px; width: 78px; margin-left: -1px; }
.fe3 { border: 2px solid #56a5da; background: #284a62; color: #4a9bd3; width: 80px; height: 46px; margin-left: -2px; }
.fe4 { border: 2px solid #56a5da; background: #254760; box-shadow: 0 0 6px rgba(86, 165, 218, .6); }
.fe5 { border: 2px solid #999; background: #b5b5b5; color: #d9d9d9; }
.ff2 { color: #4a9bd3; }
.ff3 { color: #3d7fb5; }
.ff4 { color: #2d5f8a; }
.ff4 .pi { color: #2e6a9e; }
.ff5 { color: #ccc; }
.ff5 .pi { color: #aaa; }

/* Button-Line */
.g-line { margin: 4px 0 0 23.5px; }
.f-line { width: 323px; height: 381px; display: flex; flex-direction: column; gap: 10px; }
.ln-row { display: flex; align-items: center; height: 68px; }
.ln { display: flex; align-items: center; flex: none; font-weight: 400; }
.ln.si, .ln.s { height: 18px; font-size: 13px; }
.ln.bi, .ln.b { height: 22px; font-size: 15px; }
.ln.si .pi { width: 12.5px; height: 13px; margin-right: 3px; }
.ln.bi .pi { width: 15px; height: 15.5px; margin-right: 5px; }
.r1 { padding-left: 25.5px; gap: 27px; }
.r1 .ln:nth-child(n+3) { color: #4a9bd3; }
.r1 .ln:nth-child(3) { margin-left: -3px; }
.r1 .ln:nth-child(4) { margin-left: -3px; }
.r2, .r3, .r4 { padding-left: 27px; gap: 22.5px; color: #4a9bd3; }
.r2 .ln, .r3 .ln, .r4 .ln { box-shadow: 0 2px 0 #4293c9; }
.r2 .si, .r3 .si, .r4 .si, .r2 .bi, .r3 .bi, .r4 .bi { padding: 0 1px 0 3px; }
.r2 .s, .r2 .b, .r3 .s, .r3 .b { padding: 0 1px; }
.r4 .ln { font-weight: 700; }
.r4 .si, .r4 .s { font-size: 13.5px; }
.r4 .bi, .r4 .b { font-size: 15.5px; }
.r4 .b { margin-left: 2px; }
.r5 { padding-left: 30px; gap: 25px; color: #bbb; }
.r5 .pi { color: #aaa; }

/* input */
.g-input { margin-left: 24px; }
.f-input { width: 413px; height: 459px; padding: 22px 22px 0; }
.field { height: 87px; }
.box {
  display: flex;
  align-items: center;
  box-sizing: border-box;
  height: 43px;
  padding: 0 15px 0 16px;
  border: 1.5px solid #4692c4;
  border-radius: 4px;
  background: #181818;
  color: #777;
}
.box .pi { width: 13px; height: 13px; }
.ph { margin: 0 0 2px 8px; font-size: 15px; font-weight: 400; color: #999; }
.eye { width: 17px; height: 17px; margin-left: auto; color: #666; }
.help { margin-top: 4px; font-size: 13.5px; font-weight: 400; line-height: 16px; color: #a0a0a0; }
.in2 .box { border: 2px solid #4c9ad4; }
.in3 .box { border: 2px solid #4c9ad4; box-shadow: 0 0 5px rgba(76, 154, 212, .6); }
.in4 .box { border-color: #b13e3e; }
.in5 .box { border-color: #4a4a4a; }
.in5 .ph { color: #5e5e5e; }
.in5 .help { color: #555; }

/* close buttons */
.col-right { margin: 4px 0 0 23px; }
.f-close {
  width: 115px;
  height: 174px;
  padding: 23px 0 0 23px;
  display: grid;
  grid-template-columns: 28px 18px;
  grid-auto-rows: 28px;
  column-gap: 23px;
  row-gap: 22.5px;
  align-items: center;
  justify-items: center;
}
.x-big, .x-small { display: flex; align-items: center; justify-content: center; border-radius: 50%; background: #bbb; }
.x-big { width: 27.5px; height: 27.5px; }
.x-small { width: 18px; height: 18px; }
.x-big svg { width: 20px; height: 20px; }
.x-small svg { width: 15px; height: 15px; }
.x-big path, .x-small path { stroke: #111; stroke-width: 1.6; fill: none; }
.x-small path { stroke-width: 2.2; }
.x2 { background: #999; }
.x3 path { stroke: #f4f4f4; }
.g-textarea { margin-top: 19.7px; }
.l-ta { margin-bottom: 13px; }
.textarea {
  box-sizing: border-box;
  width: 370px;
  height: 112px;
  margin-left: -1px;
  padding: 10px 16px;
  border-radius: 6px;
  background: #212121;
  color: #aaa;
  font-size: 15.1px;
  font-weight: 400;
  line-height: 20px;
}

/* Pills */
.col-pills { width: 576px; }
.f-pills {
  width: 576px;
  height: 130px;
  padding: 22px 0 0 22.5px;
  display: grid;
  grid-template-columns: 127px 106px 139.5px auto;
  grid-template-rows: 37px auto;
  row-gap: 16px;
  align-items: start;
}
.pill {
  display: flex;
  align-items: center;
  justify-content: center;
  border-radius: 4px;
  font-size: 15px;
  font-weight: 400;
}
.bold { font-weight: 700; }
.green { background: #67ad5e; }
.red { background: #e05252; }
.orange { background: #e8a33d; }
.gray { background: #a0a0a0; }
.p-lg { height: 37px; }
.p-sm { height: 28px; font-size: 13px; }
.p-md { height: 33px; }
.w111 { width: 111px; }
.w93 { width: 93px; }
.w124 { width: 124px; }
.w149 { width: 149px; }
.w92 { width: 92px; }
.w83 { width: 83px; }
.w98 { width: 98.5px; margin-left: 1.5px; font-size: 12.5px; }
.w140 { width: 140px; height: 32px; margin-top: -2px; }
.g-redes { margin-top: -18.5px; }
.f-redes, .f-redes2 {
  height: 82px;
  padding-left: 26px;
  display: flex;
  align-items: center;
  gap: 30px;
}
.f-redes { width: 381px; }
.f-redes2 { width: 202px; }
.soc { width: 30px; height: 30px; flex: none; }
.ig1 { color: #eee; }
.f-redes .ig1 { color: #fff; }
.ig2 { color: #4a9bd3; }
.ig3 { color: #2f6ea0; }
.s-x { height: 28px; }
.s-g { width: 32px; height: 32px; margin: 0 -1px; }
.s-g path { stroke: #fff; stroke-width: .7; }

/* Icons grid */
.g-icons { margin: 2px 0 0 23.5px; }
.f-icons {
  width: 377px;
  height: 326px;
  padding: 11.5px 0 0 11.5px;
  display: grid;
  grid-template-columns: repeat(7, 50.5px);
  grid-auto-rows: 50.5px;
  place-items: center;
}
.ic { width: 28px; height: 28px; }
.ic .fill { fill: #9b9b9b; fill-rule: evenodd; }
.ic .line { fill: none; stroke: #9b9b9b; stroke-width: 1.9; }
.ic .thin { fill: none; stroke: #9b9b9b; stroke-width: 1.2; }
.ic .cut { fill: #0d0d0d; }
.ic .cutline { fill: none; stroke: #0d0d0d; stroke-width: 1.6; }
.ic .cutthin { fill: none; stroke: #0d0d0d; stroke-width: 1; }
.ic .cutwide { fill: none; stroke: #0d0d0d; stroke-width: 4; }

/* State */
.g-state { margin: 4px 0 0 23.5px; }
.f-state {
  width: 159px;
  height: 345px;
  padding: 23px 0 0 22.5px;
  display: flex;
  flex-direction: column;
  gap: 23px;
}
.state {
  flex: none;
  height: 23px;
  border-radius: 4px;
  font-size: 13.5px;
  font-weight: 400;
  line-height: 22px;
  text-align: center;
  color: #e8e8e8;
}

/* Personalized icons */
.g-pers { margin: 4px 0 0 15.5px; }
.f-pers { width: 481px; height: 234px; padding-top: 26px; }
.pers-row { display: flex; align-items: center; }
.pr0 { height: 86px; }
.pr1 { height: 69px; margin-top: 28px; }
.pers { position: relative; flex: none; }
.pers svg { display: block; width: 100%; height: 100%; }
.euro {
  position: absolute;
  left: 75.75%;
  top: 76.7%;
  transform: translate(-50%, -50%);
  color: #c8e3f7;
  font-family: "Noto Sans", sans-serif;
  font-weight: 300;
  line-height: 1;
}

/* Nav */
.sec-nav { width: 1284.8px; flex: none; }
.g-list { margin-left: -7.5px; }
.f-list {
  width: 249px;
  height: 437px;
  padding: 22.5px 0 0 22.5px;
  display: flex;
  flex-direction: column;
  gap: 22px;
}
.li {
  display: flex;
  align-items: center;
  box-sizing: border-box;
  flex: none;
  width: 203px;
  height: 47px;
  padding: 0 26.5px 1px 26px;
  border-radius: 3px;
  font-size: 17.5px;
  font-weight: 400;
}
.li-chev { width: 12px; height: 8px; margin-right: 18px; }
.li-chev path, .li-arrow path { fill: none; stroke: #fff; stroke-width: 2; }
.li-arrow path { stroke-width: 2.4; }
.li-arrow { width: 12px; height: 22px; margin-left: auto; }
.plain { color: #ddd; }
.boxed, .filled { background: #212121; font-weight: 700; }
.boxed { border: 1.5px solid #555; }

.g-avatar { margin: 2px 0 0 22.8px; }
.f-avatar {
  width: 264px;
  height: 373px;
  padding: 22.7px 0 0 22.7px;
  display: grid;
  grid-template-columns: 64.6px 46px 37px;
  grid-auto-rows: 64.6px;
  gap: 22.7px 23px;
  align-items: center;
  justify-items: center;
}
.av { display: flex; align-items: center; justify-content: center; border-radius: 50%; font-weight: 700; }
.lg { width: 64.6px; height: 64.6px; font-size: 27px; }
.md { width: 46px; height: 46px; font-size: 20px; }
.sm { width: 37px; height: 37px; font-size: 13.5px; }
.a1 { background: #55a5da; }
.a2 { background: #457da3; }
.a3 { background: #3f6f90; }
.a4 { background: #315468; }
.sm.a4 { background: #33475a; }

.col-mid { width: 517px; margin: 3px 0 0 24px; flex: none; }
.f-link {
  width: 493px;
  height: 68px;
  padding: 0 0 2px 23.5px;
  display: flex;
  align-items: center;
  gap: 24px;
}
.lk { font-size: 15.3px; font-weight: 400; white-space: nowrap; }
.l1 { color: #ccc; }
.l2 { color: #3d8cc0; }
.l3 { color: #2f6d9e; }
.mid-row { display: flex; align-items: flex-start; margin-top: -18px; }
.g-navlink { margin-left: 3.5px; }
.f-navlink { width: 232.3px; height: 199px; padding: 16px 0 0 22.5px; }
.nl {
  box-sizing: border-box;
  width: 187.3px;
  height: 46px;
  font-size: 19.5px;
  font-weight: 700;
  line-height: 46px;
  text-align: center;
  white-space: nowrap;
}
.n2 { margin-top: 9px; border-bottom: 2px solid #3d85b3; }
.n3 { margin-top: 15px; border-bottom: 2px solid #3d85b3; color: #4a9bd3; }
.g-circle { margin: 5px 0 0 19.2px; }
.f-circle {
  width: 261.6px;
  height: 202px;
  padding: 23px 0 0 22.5px;
  display: grid;
  grid-template-columns: repeat(4, 37px);
  grid-auto-rows: 37px;
  gap: 23px 22.7px;
}
.circ { display: flex; align-items: center; justify-content: center; border-radius: 50%; }
.circ svg { width: 10px; height: 16px; }
.circ path { fill: none; stroke: #fff; stroke-width: 1.8; }
.c1 { background: #1a1a1a; }
.c2 { background: #444; }
.c2 path { stroke: #777; }
.c3 { background: #222; }
.c4 { background: #666; }
.c4 path { stroke: #999; }
.c5 { background: #6a6a6a; }
.g-badge { margin-top: -18px; }
.f-badge {
  width: 435.5px;
  height: 124px;
  padding: 22px 0 0 21.5px;
  display: flex;
  flex-direction: column;
  gap: 21.7px;
}
.bd-row { display: flex; align-items: flex-start; height: 29px; gap: 21.3px; }
.bd {
  display: flex;
  align-items: center;
  justify-content: center;
  box-sizing: border-box;
  padding-bottom: 2px;
  border: 1.5px solid #4a8fbf;
  border-radius: 4px;
  font-size: 15.3px;
  font-weight: 400;
  color: #e8e8e8;
}
.bd1 { width: 130.6px; height: 29.5px; }
.bd2 { width: 102px; height: 29.5px; gap: 14px; }
.bd2 svg { width: 10px; height: 10px; margin-top: 2px; }
.bd2 path { stroke: #ccc; stroke-width: 1.3; fill: none; }
.bd3 { width: 93px; height: 25px; font-size: 13.3px; }
.on .bd { background: #284a62; }

.g-ind { margin: 3px 0 0 23px; }
.f-ind {
  width: 80px;
  height: 198px;
  padding: 23px 0 0 22.5px;
  display: flex;
  flex-direction: column;
}
.dots { display: flex; flex: none; }
.dots i { display: block; border-radius: 50%; background: #666; }
.dots i.on { background: #2a5a82; }
.big { gap: 6.7px; height: 8px; margin-bottom: 23px; }
.big i { width: 8px; height: 8px; }
.small { gap: 4.2px; height: 5px; margin-bottom: 22.5px; }
.small i { width: 5px; height: 5px; }

/* Selectors */
.sec-sel { flex: none; }
.f-qty {
  width: 188px;
  height: 216px;
  padding: 23.7px 0 0 22.2px;
  display: flex;
  flex-direction: column;
  gap: 22.3px;
}
.qty {
  display: flex;
  box-sizing: border-box;
  flex: none;
  width: 143.5px;
  height: 42px;
  border: 1.5px solid #bbb;
  border-radius: 21px;
  overflow: hidden;
  font-weight: 700;
  line-height: 39px;
  text-align: center;
}
.q-btn { flex: 1; background: #1c1c1c; font-size: 17px; }
.q-btn.plus { font-size: 22px; }
.q-btn.on { background: #457da3; color: #ddd; }
.q-val { width: 47px; background: #ececec; color: #1c1c1c; font-size: 17px; }
.g-check { margin: 3px 0 0 23.5px; }
.f-check {
  width: 64px;
  height: 115px;
  padding: 23px 0 0 23px;
  display: flex;
  flex-direction: column;
  gap: 33px;
}
.cb {
  box-sizing: border-box;
  flex: none;
  width: 18.5px;
  height: 18.7px;
  border: 1.5px solid #777;
  border-radius: 2px;
}
.cb.on { border: 0; background: #4f9fd8; }
.cb svg { display: block; width: 18.5px; height: 18.7px; }
.cb path { fill: none; stroke: #14202b; stroke-width: 1.8; }
.g-radio { margin-left: 23px; }
.f-radio {
  width: 73.5px;
  height: 174px;
  padding-top: 24.5px;
  display: flex;
  flex-direction: column;
  align-items: center;
  gap: 23.5px;
}
.rd {
  display: flex;
  align-items: center;
  justify-content: center;
  box-sizing: border-box;
  flex: none;
  width: 27px;
  height: 27px;
  border: 1.5px solid #3d85b3;
  border-radius: 50%;
}
.rd.hov { border: 2px solid #55a5da; width: 29px; height: 29px; margin: -1px 0; }
.rd.sel i { display: block; width: 20px; height: 20px; border-radius: 50%; background: #55a5da; }
</style>
